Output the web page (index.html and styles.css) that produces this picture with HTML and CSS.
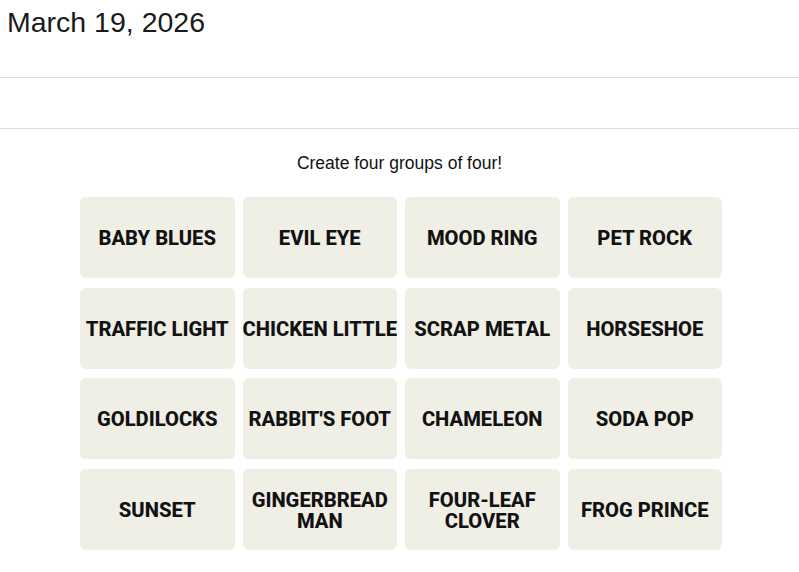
FILE: index.html
```html
<!DOCTYPE html>
<html lang="en">
<head>
<meta charset="utf-8">
<title>Connections</title>
<link rel="stylesheet" href="styles.css">
</head>
<body>
  <header class="date">March 19, 2026</header>
  <div class="band"></div>
  <main class="game">
    <p class="instructions">Create four groups of four!</p>
    <div class="board">
      <div class="card">BABY BLUES</div>
      <div class="card">EVIL EYE</div>
      <div class="card">MOOD RING</div>
      <div class="card">PET ROCK</div>
      <div class="card">TRAFFIC LIGHT</div>
      <div class="card">CHICKEN LITTLE</div>
      <div class="card">SCRAP METAL</div>
      <div class="card">HORSESHOE</div>
      <div class="card">GOLDILOCKS</div>
      <div class="card">RABBIT'S FOOT</div>
      <div class="card">CHAMELEON</div>
      <div class="card">SODA POP</div>
      <div class="card">SUNSET</div>
      <div class="card">GINGERBREAD MAN</div>
      <div class="card">FOUR-LEAF CLOVER</div>
      <div class="card">FROG PRINCE</div>
    </div>
  </main>
</body>
</html>
```

FILE: styles.css
```css
html, body {
  margin: 0;
  padding: 0;
  background: #ffffff;
  color: #121212;
}

.date {
  box-sizing: border-box;
  height: 78px;
  padding: 8px 7px 0;
  font-family: "Liberation Sans", Arial, sans-serif;
  font-size: 28.5px;
  line-height: 28px;
  color: #1a1a1a;
  border-bottom: 1px solid #dcdcdc;
}

.band {
  height: 50px;
  border-bottom: 1px solid #dcdcdc;
}

.game {
  display: flex;
  flex-direction: column;
  align-items: center;
}

.instructions {
  margin: 24px 0 24px;
  font-family: "Liberation Sans", Arial, sans-serif;
  font-size: 17.5px;
  line-height: 20px;
  color: #121212;
}

.board {
  display: grid;
  grid-template-columns: repeat(4, 154.5px);
  grid-auto-rows: 81px;
  column-gap: 8px;
  row-gap: 9.7px;
  margin-left: 3px;
}

.card {
  display: flex;
  align-items: center;
  justify-content: center;
  box-sizing: border-box;
  padding-top: 2px;
  text-align: center;
  background: #efefe6;
  border-radius: 6px;
  font-family: Roboto, "Liberation Sans", sans-serif;
  font-weight: 800;
  font-size: 20.2px;
  line-height: 21px;
  color: #121212;
}
```
